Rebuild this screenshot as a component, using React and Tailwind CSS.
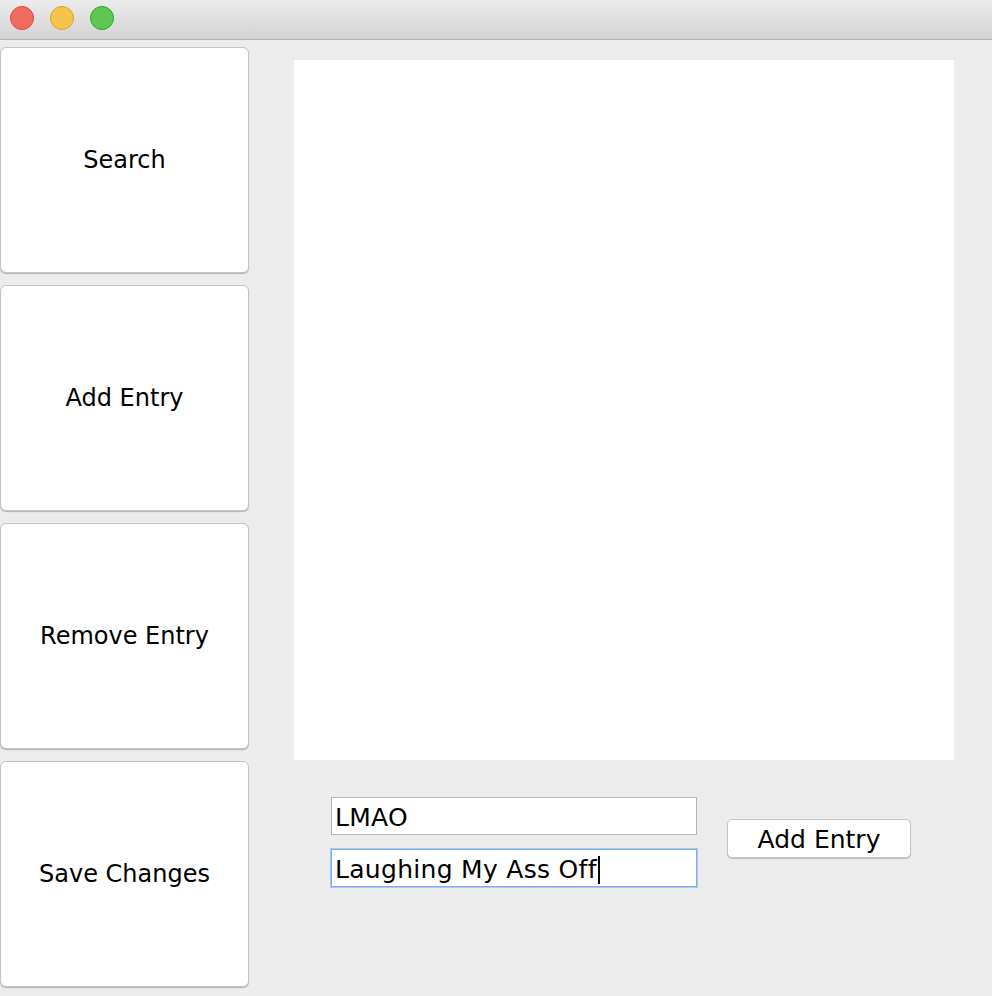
import React from "react";

const font = { fontFamily: '"DejaVu Sans", "Liberation Sans", sans-serif' };

function SideButton({ label }) {
  return (
    <button className="h-[226px] w-[249px] rounded-[6px] border border-[#c4c4c4] bg-white text-[24px] text-black shadow-[0_1px_1px_rgba(0,0,0,0.25)]">
      {label}
    </button>
  );
}

export default function App() {
  return (
    <div className="flex h-[996px] w-[992px] flex-col overflow-hidden bg-[#ececec]" style={font}>
      {/* Title bar */}
      <div className="flex h-[40px] items-start gap-[16px] border-b border-[#b1b1b1] bg-gradient-to-b from-[#ececec] to-[#d3d3d3] pl-[10px] pt-[6px]">
        <span className="h-[24px] w-[24px] rounded-full border border-[#e0443e] bg-[#f06c60]" />
        <span className="h-[24px] w-[24px] rounded-full border border-[#dea123] bg-[#f8c24f]" />
        <span className="h-[24px] w-[24px] rounded-full border border-[#1aab29] bg-[#62c654]" />
      </div>

      <div className="flex flex-1">
        {/* Sidebar */}
        <div className="flex flex-col gap-[12px] pt-[7px]">
          <SideButton label="Search" />
          <SideButton label="Add Entry" />
          <SideButton label="Remove Entry" />
          <SideButton label="Save Changes" />
        </div>

        {/* Main */}
        <div className="flex flex-col pl-[45px] pt-[20px]">
          <div className="h-[700px] w-[660px] bg-white" />
          <div className="flex items-start pl-[37px] pt-[37px]">
            <div className="flex flex-col gap-[14px]">
              <div className="flex h-[38px] w-[366px] items-center border border-[#b5b5b5] bg-white px-[3px] pt-[3px] text-[25px] tracking-[0.3px] text-black">
                LMAO
              </div>
              <div className="flex h-[38px] w-[366px] items-center border border-[#7eaef0] bg-white px-[3px] pt-[3px] text-[25px] tracking-[0.3px] text-black shadow-[0_0_0_1px_#a9c9f4]">
                <span>Laughing My Ass Off</span>
                <span className="ml-[1px] h-[28px] w-[2px] bg-black" />
              </div>
            </div>
            <button className="ml-[30px] mt-[22px] h-[39px] w-[184px] rounded-[5px] border border-[#c4c4c4] bg-white pt-[1px] text-[25px] text-black shadow-[0_1px_1px_rgba(0,0,0,0.2)]">
              Add Entry
            </button>
          </div>
        </div>
      </div>
    </div>
  );
}
